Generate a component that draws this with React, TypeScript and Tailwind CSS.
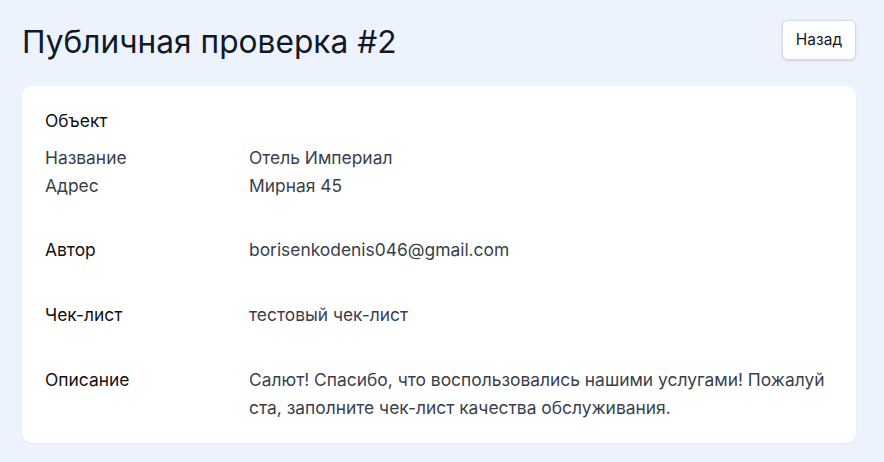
export default function App() {
  const font = { fontFamily: "Inter, Roboto, sans-serif" };
  return (
    <div className="min-h-[462px] bg-[#edf3fd] pl-[22px] pr-[28px] pt-[20px] pb-[19px]" style={font}>
      <div className="flex items-start justify-between">
        <h1 className="pt-[2px] text-[31.7px] leading-[40px] font-normal text-[#111827]">Публичная проверка #2</h1>
        <button
          type="button"
          className="h-[40px] w-[74px] rounded-md border border-[#d6dae0] bg-white text-[15.5px] text-[#111827] shadow-sm"
        >
          Назад
        </button>
      </div>

      <div className="mt-[24px] rounded-[10px] bg-white px-[23px] pt-[21px] pb-[21px] text-[17.4px] leading-[28px] shadow-[0_1px_2px_rgba(0,0,0,0.04)]">
        <div className="text-[#111111]">Объект</div>
        <div className="mt-[9px] grid grid-cols-[204px_1fr] text-[#3a3f4a]">
          <div>Название</div>
          <div>Отель Империал</div>
          <div>Адрес</div>
          <div>Мирная 45</div>
        </div>

        <div className="mt-[36px] grid grid-cols-[204px_1fr]">
          <div className="text-[#111111]">Автор</div>
          <div className="text-[#3a3f4a]">borisenkodenis046@gmail.com</div>
        </div>

        <div className="mt-[37px] grid grid-cols-[204px_1fr]">
          <div className="text-[#111111]">Чек-лист</div>
          <div className="text-[#3a3f4a]">тестовый чек-лист</div>
        </div>

        <div className="mt-[37px] grid grid-cols-[204px_1fr]">
          <div className="text-[#111111]">Описание</div>
          <div className="break-all text-[#3a3f4a]">
            Салют! Спасибо, что воспользовались нашими услугами! Пожалуйста, заполните чек-лист качества обслуживания.
          </div>
        </div>
      </div>
    </div>
  );
}
